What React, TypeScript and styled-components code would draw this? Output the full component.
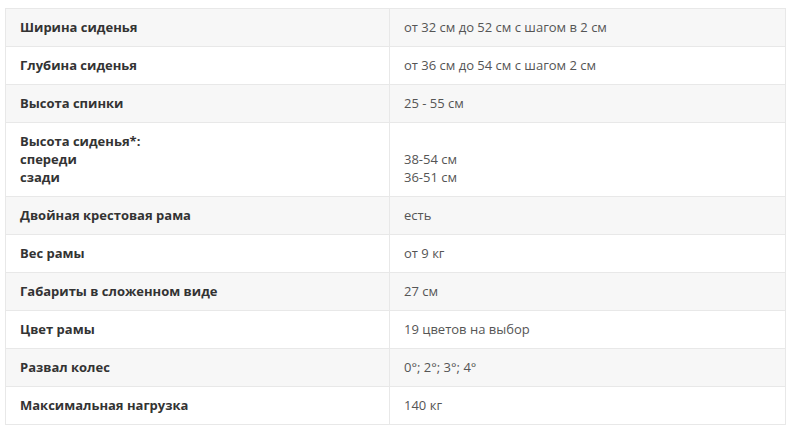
import React from 'react';
import styled, { createGlobalStyle } from 'styled-components';

const GlobalStyle = createGlobalStyle`
    body {
        margin: 0;
        background: #fff;
        font-family: "Open Sans", "Liberation Sans", sans-serif;
    }
`;

const Page = styled.div`
    padding: 8px 9px 0 5px;
`;

const SpecTable = styled.table`
    width: 781px;
    border-collapse: collapse;
    font-size: 13px;
    line-height: 18px;
`;

const Row = styled.tr<{ $striped: boolean }>`
    background: ${(p) => (p.$striped ? '#f7f7f7' : '#fff')};
`;

const Cell = styled.td`
    border: 1px solid #e8e8e8;
    padding: 9px 15px 10px 14px;
    vertical-align: top;
`;

const Label = styled(Cell)`
    width: 354px;
    font-weight: 700;
    color: #333;
`;

const Value = styled(Cell)`
    color: #555;
`;

const specs: [React.ReactNode, React.ReactNode][] = [
    ['Ширина сиденья', 'от 32 см до 52 см с шагом в 2 см'],
    ['Глубина сиденья', 'от 36 см до 54 см с шагом 2 см'],
    ['Высота спинки', '25 - 55 см'],
    [
        <>
            Высота сиденья*:
            <br />
            спереди
            <br />
            сзади
        </>,
        <>
            <br />
            38-54 см
            <br />
            36-51 см
        </>
    ],
    ['Двойная крестовая рама', 'есть'],
    ['Вес рамы', 'от 9 кг'],
    ['Габариты в сложенном виде', '27 см'],
    ['Цвет рамы', '19 цветов на выбор'],
    ['Развал колес', '0°; 2°; 3°; 4°'],
    ['Максимальная нагрузка', '140 кг']
];

const App = () => {
    return (
        <Page>
            <GlobalStyle />
            <SpecTable>
                <tbody>
                    {specs.map(([label, value], i) => (
                        <Row key={i} $striped={i % 2 === 0}>
                            <Label>{label}</Label>
                            <Value>{value}</Value>
                        </Row>
                    ))}
                </tbody>
            </SpecTable>
        </Page>
    );
};

export default App;
